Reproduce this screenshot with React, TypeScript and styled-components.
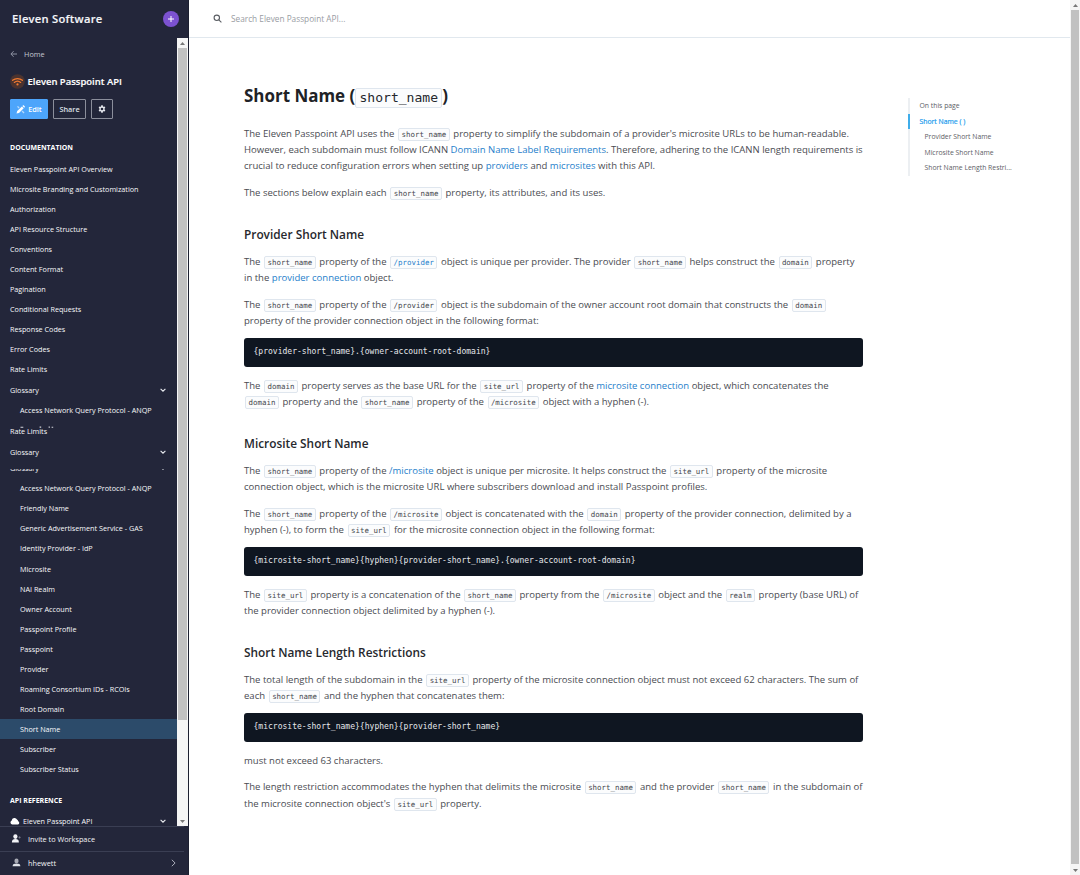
import React from 'react';
import styled, { createGlobalStyle } from 'styled-components';

const GlobalStyle = createGlobalStyle`
  * { box-sizing: border-box; }
  body {
    margin: 0;
    background: #fff;
    overflow: hidden;
    font-family: "Open Sans", "Noto Sans", sans-serif;
  }
`;

const Page = styled.div`
  display: flex;
  width: 1080px;
  height: 875px;
  overflow: hidden;
  background: #fff;
`;

/* ---------- sidebar ---------- */

const Sidebar = styled.aside`
  display: flex;
  flex-direction: column;
  flex: none;
  width: 189px;
  height: 875px;
  background: #23263a;
  color: #eceef3;
  border-right: 1px solid #1c1f30;
`;

const BrandBar = styled.div`
  display: flex;
  align-items: center;
  justify-content: space-between;
  flex: none;
  height: 38px;
  padding: 0 9px 0 12px;
`;

const Brand = styled.div`
  font-size: 11.2px;
  font-weight: 600;
  letter-spacing: 0.26px;
  line-height: 16px;
  white-space: nowrap;
  color: #f4f5f8;
  -webkit-text-stroke: 0.15px #f4f5f8;
`;

const AddButton = styled.button`
  display: flex;
  align-items: center;
  justify-content: center;
  width: 16px;
  height: 16px;
  padding: 0;
  border: 0;
  border-radius: 50%;
  background: #7c52d0;
  color: #fff;
`;

const SidebarBody = styled.div`
  display: flex;
  flex: none;
  height: 788px;
`;

const Nav = styled.nav`
  flex: none;
  width: 177px;
  height: 788px;
  overflow: hidden;
`;

const HomeLink = styled.div`
  display: flex;
  align-items: center;
  gap: 7px;
  height: 14px;
  margin-top: 8.5px;
  padding-left: 10px;
  font-size: 7.3px;
  color: #c3c6d1;
`;

const ProjectTitle = styled.div`
  display: flex;
  align-items: center;
  gap: 2.5px;
  height: 16px;
  margin-top: 12.5px;
  padding-left: 10px;
  font-size: 9.47px;
  font-weight: 600;
  white-space: nowrap;
  color: #fff;
  -webkit-text-stroke: 0.15px #fff;
`;

const Actions = styled.div`
  display: flex;
  gap: 5px;
  margin-top: 10px;
  padding-left: 10px;
`;

const ActionButton = styled.button<{ $width: number; $primary?: boolean }>`
  display: flex;
  align-items: center;
  justify-content: center;
  gap: 3px;
  width: ${(p) => p.$width}px;
  height: 20px;
  padding: 0;
  border: 1px solid ${(p) => (p.$primary ? '#4da5fb' : '#8b8e9b')};
  border-radius: 1px;
  background: ${(p) => (p.$primary ? '#4da5fb' : 'transparent')};
  color: ${(p) => (p.$primary ? '#fff' : '#dfe1e8')};
  font-family: inherit;
  font-size: 7.3px;
  font-weight: 600;
`;

const SectionTitle = styled.div<{ $top: number }>`
  height: 14px;
  margin-top: ${(p) => p.$top}px;
  padding-left: 10px;
  font-size: 6.98px;
  font-weight: 700;
  line-height: 14px;
  white-space: nowrap;
  color: #fff;
`;

const NavList = styled.div<{ $top?: number }>`
  display: flex;
  flex-direction: column;
  margin-top: ${(p) => p.$top ?? 0}px;
`;

const NavItem = styled.div<{ $nested?: boolean; $active?: boolean }>`
  display: flex;
  align-items: center;
  justify-content: space-between;
  flex: none;
  height: 20.1px;
  padding: 0 11px 0 ${(p) => (p.$nested ? 20 : 10)}px;
  background: ${(p) => (p.$active ? '#2c4b6a' : 'transparent')};
  font-size: 7.22px;
  font-weight: 400;
  white-space: nowrap;
  color: #f8f9fb;
`;

const SlicedRow = styled.div<{ $gap: number; $height: number; $shift: number }>`
  flex: none;
  height: ${(p) => p.$height}px;
  margin-top: ${(p) => p.$gap}px;
  overflow: hidden;

  > * {
    margin-top: -${(p) => p.$shift}px;
  }
`;

const Fragments = styled.svg`
  display: block;
  flex: none;
  margin: 6.6px 0 0 10px;
`;

const ApiItem = styled(NavItem)`
  justify-content: flex-start;
  gap: 3px;

  > svg:last-child {
    margin-left: auto;
  }
`;

const FooterRow = styled.div<{ $height: number }>`
  display: flex;
  align-items: center;
  flex: none;
  gap: 7px;
  height: ${(p) => p.$height}px;
  margin-right: 4px;
  padding: 0 8px 0 11px;
  border-top: 1px solid #3a3e53;
  font-size: 7.3px;
  white-space: nowrap;
  color: #f3f4f7;

  > svg:nth-of-type(2) {
    margin-left: auto;
  }
`;

/* ---------- scrollbars ---------- */

const Scrollbar = styled.div<{ $width: number }>`
  display: flex;
  flex-direction: column;
  align-items: center;
  flex: none;
  width: ${(p) => p.$width}px;
  height: 100%;
  background: #f5f5f5;
`;

const ScrollArrow = styled.div`
  display: flex;
  align-items: center;
  justify-content: center;
  flex: none;
  width: 100%;
  height: 10px;
`;

const ScrollThumb = styled.div<{ $height: number }>`
  flex: none;
  width: calc(100% - 2px);
  height: ${(p) => p.$height}px;
  background: #c1c1c1;
`;

const ScrollSpace = styled.div`
  flex: 1;
`;

/* ---------- main column ---------- */

const Main = styled.main`
  display: flex;
  flex-direction: column;
  flex: 1;
  min-width: 0;
`;

const SearchBar = styled.div`
  display: flex;
  align-items: center;
  flex: none;
  gap: 9px;
  height: 38px;
  padding-left: 24px;
  border-bottom: 1px solid #e1e8ee;
  font-size: 8.27px;
  color: #999ca3;
`;

const Columns = styled.div`
  display: flex;
  align-items: flex-start;
  padding-left: 55px;
`;

const Article = styled.article`
  flex: none;
  width: 619px;
  padding-top: 46px;
  color: #4a4c52;
`;

const Title = styled.h1`
  height: 23px;
  margin: 0 0 18.8px;
  font-size: 16.95px;
  font-weight: 700;
  line-height: 23px;
  white-space: nowrap;
  color: #202226;
`;

const Heading = styled.h2`
  height: 20px;
  margin: 23px 0 9.7px;
  font-size: 11.85px;
  font-weight: 600;
  line-height: 20px;
  color: #26282d;
`;

const Paragraph = styled.p`
  margin: 0 0 10.2px;
  font-size: 9.54px;
  line-height: 16.3px;
`;

const Line = styled.span`
  display: block;
  height: 16.3px;
  white-space: nowrap;
`;

const Link = styled.a`
  color: #2680cb;
`;

const Code = styled.code<{ $link?: boolean }>`
  display: inline-block;
  height: 13px;
  margin: 0 1.2px;
  padding: 0 2.4px;
  border: 1px solid #dfe6ee;
  border-radius: 2px;
  background: #fbfcfd;
  color: ${(p) => (p.$link ? '#2680cb' : '#46484e')};
  font-family: "DejaVu Sans Mono", monospace;
  font-size: 7.45px;
  line-height: 11px;
`;

const TitleCode = styled(Code)`
  height: 20px;
  margin: 0;
  padding: 0 3.3px;
  color: #26282d;
  font-size: 13.05px;
  font-weight: 400;
  line-height: 17px;
`;

const CodeBlock = styled.pre`
  height: 28.4px;
  margin: -1.3px 0 11.1px;
  padding: 0 9.5px;
  border-radius: 3px;
  background: #0f1621;
  color: #e6e8ec;
  font-family: "DejaVu Sans Mono", monospace;
  font-size: 8.04px;
  line-height: 28.6px;
`;

const Toc = styled.div`
  display: flex;
  flex-direction: column;
  margin: 60px 0 0 45px;
  border-left: 2px solid #eceff2;
`;

const TocItem = styled.div<{ $nested?: boolean; $active?: boolean }>`
  height: 15.5px;
  margin-left: -2px;
  padding-left: ${(p) => (p.$nested ? 14.5 : 9.5)}px;
  border-left: 2px solid ${(p) => (p.$active ? '#3fadea' : 'transparent')};
  font-size: 6.83px;
  line-height: 15.5px;
  white-space: nowrap;
  color: ${(p) => (p.$active ? '#1c9cee' : '#5d6066')};
  -webkit-text-stroke: ${(p) => (p.$active ? '0.2px #1c9cee' : '0')};
`;

/* ---------- icons ---------- */

const PlusIcon = () => (
  <svg width="8" height="8" viewBox="0 0 8 8" fill="none" stroke="currentColor" strokeWidth="1">
    <path d="M4 1v6M1 4h6" />
  </svg>
);

const BackIcon = () => (
  <svg width="7" height="8" viewBox="0 0 7 8" fill="none" stroke="#8f93a3" strokeWidth="1">
    <path d="M7 4H1M3.6 1.2L.9 4l2.7 2.8" />
  </svg>
);

const WifiBadge = () => (
  <svg width="15" height="15" viewBox="0 0 15 15" fill="none">
    <circle cx="7.5" cy="7.5" r="7.3" fill="#4b332f" />
    <path
      d="M2.6 6.3c2.8-2.4 7-2.4 9.8 0M4.3 8.4c1.9-1.6 4.5-1.6 6.4 0"
      stroke="#f27a30"
      strokeWidth="1.25"
      strokeLinecap="round"
    />
    <circle cx="7.5" cy="10.4" r="1.1" fill="#f27a30" />
  </svg>
);

const PencilIcon = () => (
  <svg width="9" height="9" viewBox="0 0 9 9" fill="#fff">
    <path d="M.5 8.6l.7-2.5L5.9 1.4l1.8 1.8L3 7.9z" />
    <path d="M6.4.9l.5-.5c.3-.3.7-.3 1 0l.8.8c.3.3.3.7 0 1l-.5.5z" />
    <path d="M1 1.8l1-.9 1.6 1.6-.9.9zM5.6 6.4l.9-.9 2 2-.9.9z" opacity=".6" />
  </svg>
);

const GearIcon = () => (
  <svg width="8" height="8" viewBox="0 0 24 24" fill="#e6e8ee" fillRule="evenodd">
    <path d="M9.8 1h4.4l.7 3.2 1.7 1 3.1-1L22 8l-2.4 2.2v3.6L22 16l-2.3 3.8-3.1-1-1.7 1-.7 3.2H9.8l-.7-3.2-1.7-1-3.1 1L2 16l2.4-2.2v-3.6L2 8l2.3-3.8 3.1 1 1.7-1zM12 8a4 4 0 100 8 4 4 0 000-8z" />
  </svg>
);

const ChevronDown = () => (
  <svg width="6" height="6" viewBox="0 0 6 6" fill="none" stroke="#e9ebf0" strokeWidth="1.1">
    <path d="M.6 1.8L3 4.2l2.4-2.4" />
  </svg>
);

const ChevronRight = () => (
  <svg width="5" height="8" viewBox="0 0 5 8" fill="none" stroke="#a9acb8" strokeWidth="1">
    <path d="M.8.8L4.1 4 .8 7.2" />
  </svg>
);

const CloudIcon = () => (
  <svg width="10" height="8" viewBox="0 0 10 8" fill="#fff">
    <path d="M2.3 7.4A2.1 2.1 0 011.7 3.4 2.8 2.8 0 017 2.5a2 2 0 011.1 1.8A1.6 1.6 0 018 7.4z" />
  </svg>
);

const UserPlusIcon = () => (
  <svg width="10" height="9" viewBox="0 0 10 9" fill="#f3f4f7">
    <ellipse cx="4.4" cy="2.6" rx="2.1" ry="2.3" />
    <path d="M.9 8.4c0-2.7 1.2-3.4 3.5-3.4s3.5.7 3.5 3.4z" />
    <path d="M7.5 3.4h2.2M8.6 2.3v2.2" stroke="#7d8090" strokeWidth=".8" />
  </svg>
);

const UserIcon = () => (
  <svg width="10" height="9" viewBox="0 0 10 9" fill="#dfe1e7">
    <ellipse cx="5.5" cy="2.9" rx="2.1" ry="2.4" fill="#a7a9b3" />
    <path d="M1.6 8.2c0-2.1 1.5-2.7 3.9-2.7s3.9.6 3.9 2.7z" />
  </svg>
);

const SearchIcon = () => (
  <svg width="9" height="9" viewBox="0 0 9 9" fill="none" stroke="#5a5d63" strokeWidth="1.1">
    <circle cx="3.8" cy="3.8" r="2.7" />
    <path d="M5.8 5.8L8.4 8.4" />
  </svg>
);

const Triangle = ({ down }: { down?: boolean }) => (
  <svg width="5" height="3" viewBox="0 0 5 3" fill="#777">
    <path d={down ? 'M0 0h5L2.5 3z' : 'M0 3h5L2.5 0z'} />
  </svg>
);

/* ---------- data ---------- */

const topics = [
  'Eleven Passpoint API Overview',
  'Microsite Branding and Customization',
  'Authorization',
  'API Resource Structure',
  'Conventions',
  'Content Format',
  'Pagination',
  'Conditional Requests',
  'Response Codes',
  'Error Codes',
  'Rate Limits',
];

const terms = [
  'Access Network Query Protocol - ANQP',
  'Friendly Name',
  'Generic Advertisement Service - GAS',
  'Identity Provider - IdP',
  'Microsite',
  'NAI Realm',
  'Owner Account',
  'Passpoint Profile',
  'Passpoint',
  'Provider',
  'Roaming Consortium IDs - RCOIs',
  'Root Domain',
  'Short Name',
  'Subscriber',
  'Subscriber Status',
];

const Glossary = () => (
  <NavItem>
    Glossary
    <ChevronDown />
  </NavItem>
);

const ShortName = () => <Code>short_name</Code>;

export default function App() {
  return (
    <Page>
      <GlobalStyle />
      <Sidebar>
        <BrandBar>
          <Brand>Eleven Software</Brand>
          <AddButton>
            <PlusIcon />
          </AddButton>
        </BrandBar>
        <SidebarBody>
          <Nav>
            <HomeLink>
              <BackIcon />
              Home
            </HomeLink>
            <ProjectTitle>
              <WifiBadge />
              Eleven Passpoint API
            </ProjectTitle>
            <Actions>
              <ActionButton $width={38} $primary>
                <PencilIcon />
                Edit
              </ActionButton>
              <ActionButton $width={33}>Share</ActionButton>
              <ActionButton $width={22}>
                <GearIcon />
              </ActionButton>
            </Actions>
            <SectionTitle $top={22}>DOCUMENTATION</SectionTitle>
            <NavList $top={3.5}>
              {topics.map((t) => (
                <NavItem key={t}>{t}</NavItem>
              ))}
              <Glossary />
              <NavItem $nested>Access Network Query Protocol - ANQP</NavItem>
              <Fragments width="50" height="2" viewBox="0 0 50 2" fill="#d5d7de">
                <path d="M10.5.8h2.8v.9h-2.8zM29.6.6h1.6v1.2h-1.6zM38.6.5h1.3v1.2h-1.3zM41.6.7h1.6v1h-1.6z" />
              </Fragments>
              <SlicedRow $gap={0.2} $height={13.2} $shift={7.9}>
                <NavItem>Rate Limits</NavItem>
              </SlicedRow>
              <Glossary />
              <SlicedRow $gap={6.8} $height={9.5} $shift={10.6}>
                <Glossary />
              </SlicedRow>
              {terms.map((t) => (
                <NavItem key={t} $nested $active={t === 'Short Name'}>
                  {t}
                </NavItem>
              ))}
            </NavList>
            <SectionTitle $top={14.5}>API REFERENCE</SectionTitle>
            <NavList $top={3}>
              <ApiItem>
                <CloudIcon />
                Eleven Passpoint API
                <ChevronDown />
              </ApiItem>
            </NavList>
          </Nav>
          <Scrollbar $width={11}>
            <ScrollArrow>
              <Triangle />
            </ScrollArrow>
            <ScrollThumb $height={672} />
            <ScrollSpace />
            <ScrollArrow>
              <Triangle down />
            </ScrollArrow>
          </Scrollbar>
        </SidebarBody>
        <FooterRow $height={24.5}>
          <UserPlusIcon />
          Invite to Workspace
        </FooterRow>
        <FooterRow $height={23.5}>
          <UserIcon />
          hhewett
          <ChevronRight />
        </FooterRow>
      </Sidebar>

      <Main>
        <SearchBar>
          <SearchIcon />
          Search Eleven Passpoint API...
        </SearchBar>
        <Columns>
          <Article>
            <Title>
              Short Name (<TitleCode>short_name</TitleCode>)
            </Title>
            <Paragraph>
              <Line>
                The Eleven Passpoint API uses the <ShortName /> property to simplify the subdomain of a provider's
                microsite URLs to be human-readable.
              </Line>
              <Line>
                However, each subdomain must follow ICANN <Link>Domain Name Label Requirements</Link>. Therefore,
                adhering to the ICANN length requirements is
              </Line>
              <Line>
                crucial to reduce configuration errors when setting up <Link>providers</Link> and{' '}
                <Link>microsites</Link> with this API.
              </Line>
            </Paragraph>
            <Paragraph>
              <Line>
                The sections below explain each <ShortName /> property, its attributes, and its uses.
              </Line>
            </Paragraph>

            <Heading>Provider Short Name</Heading>
            <Paragraph>
              <Line>
                The <ShortName /> property of the <Code $link>/provider</Code> object is unique per provider. The
                provider <ShortName /> helps construct the <Code>domain</Code> property
              </Line>
              <Line>
                in the <Link>provider connection</Link> object.
              </Line>
            </Paragraph>
            <Paragraph>
              <Line>
                The <ShortName /> property of the <Code>/provider</Code> object is the subdomain of the owner account
                root domain that constructs the <Code>domain</Code>
              </Line>
              <Line>property of the provider connection object in the following format:</Line>
            </Paragraph>
            <CodeBlock>{'{provider-short_name}.{owner-account-root-domain}'}</CodeBlock>
            <Paragraph>
              <Line>
                The <Code>domain</Code> property serves as the base URL for the <Code>site_url</Code> property of the{' '}
                <Link>microsite connection</Link> object, which concatenates the
              </Line>
              <Line>
                <Code>domain</Code> property and the <ShortName /> property of the <Code>/microsite</Code> object with
                a hyphen (-).
              </Line>
            </Paragraph>

            <Heading>Microsite Short Name</Heading>
            <Paragraph>
              <Line>
                The <ShortName /> property of the <Link>/microsite</Link> object is unique per microsite. It helps
                construct the <Code>site_url</Code> property of the microsite
              </Line>
              <Line>
                connection object, which is the microsite URL where subscribers download and install Passpoint
                profiles.
              </Line>
            </Paragraph>
            <Paragraph>
              <Line>
                The <ShortName /> property of the <Code>/microsite</Code> object is concatenated with the{' '}
                <Code>domain</Code> property of the provider connection, delimited by a
              </Line>
              <Line>
                hyphen (-), to form the <Code>site_url</Code> for the microsite connection object in the following
                format:
              </Line>
            </Paragraph>
            <CodeBlock>{'{microsite-short_name}{hyphen}{provider-short_name}.{owner-account-root-domain}'}</CodeBlock>
            <Paragraph>
              <Line>
                The <Code>site_url</Code> property is a concatenation of the <ShortName /> property from the{' '}
                <Code>/microsite</Code> object and the <Code>realm</Code> property (base URL) of
              </Line>
              <Line>the provider connection object delimited by a hyphen (-).</Line>
            </Paragraph>

            <Heading>Short Name Length Restrictions</Heading>
            <Paragraph>
              <Line>
                The total length of the subdomain in the <Code>site_url</Code> property of the microsite connection
                object must not exceed 62 characters. The sum of
              </Line>
              <Line>
                each <ShortName /> and the hyphen that concatenates them:
              </Line>
            </Paragraph>
            <CodeBlock>{'{microsite-short_name}{hyphen}{provider-short_name}'}</CodeBlock>
            <Paragraph>
              <Line>must not exceed 63 characters.</Line>
            </Paragraph>
            <Paragraph>
              <Line>
                The length restriction accommodates the hyphen that delimits the microsite <ShortName /> and the
                provider <ShortName /> in the subdomain of
              </Line>
              <Line>
                the microsite connection object's <Code>site_url</Code> property.
              </Line>
            </Paragraph>
          </Article>
          <Toc>
            <TocItem>On this page</TocItem>
            <TocItem $active>Short Name ( )</TocItem>
            <TocItem $nested>Provider Short Name</TocItem>
            <TocItem $nested>Microsite Short Name</TocItem>
            <TocItem $nested>Short Name Length Restri...</TocItem>
          </Toc>
        </Columns>
      </Main>

      <Scrollbar $width={10}>
        <ScrollArrow>
          <Triangle />
        </ScrollArrow>
        <ScrollThumb $height={854} />
        <ScrollSpace />
        <ScrollArrow>
          <Triangle down />
        </ScrollArrow>
      </Scrollbar>
    </Page>
  );
}
